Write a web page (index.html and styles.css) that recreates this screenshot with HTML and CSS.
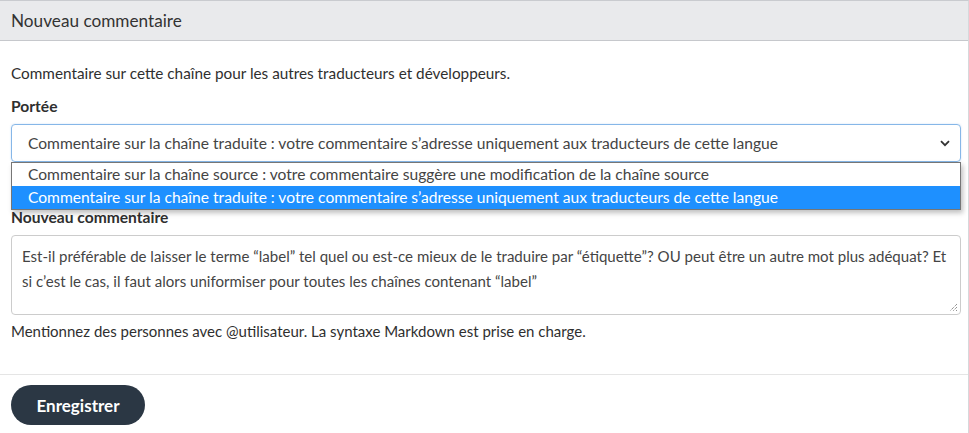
FILE: index.html
```html
<!DOCTYPE html>
<html lang="fr">
<head>
<meta charset="utf-8">
<title>Nouveau commentaire</title>
<link rel="stylesheet" href="styles.css">
</head>
<body>
<div class="panel">
  <div class="panel-heading">Nouveau commentaire</div>
  <div class="panel-body">
    <p class="intro">Commentaire sur cette chaîne pour les autres traducteurs et développeurs.</p>
    <div class="field field-scope">
      <label class="label">Portée</label>
      <div class="select">
        <span class="select-value">Commentaire sur la chaîne traduite : votre commentaire s’adresse uniquement aux traducteurs de cette langue</span>
        <svg class="chevron" width="10" height="7" viewBox="0 0 10 7"><path d="M1 1.2 L5 5.2 L9 1.2" fill="none" stroke="#333" stroke-width="1.8"/></svg>
      </div>
      <ul class="dropdown">
        <li class="option">Commentaire sur la chaîne source : votre commentaire suggère une modification de la chaîne source</li>
        <li class="option selected">Commentaire sur la chaîne traduite : votre commentaire s’adresse uniquement aux traducteurs de cette langue</li>
      </ul>
    </div>
    <div class="field">
      <label class="label">Nouveau commentaire</label>
      <div class="textarea">Est-il préférable de laisser le terme “label” tel quel ou est-ce mieux de le traduire par “étiquette”? OU peut être un autre mot plus adéquat? Et si c’est le cas, il faut alors uniformiser pour toutes les chaînes contenant “label”<svg class="grip" width="9" height="9" viewBox="0 0 9 9"><path d="M8 1 L1 8 M8 4 L4 8 M8 7 L7 8" stroke="#666" stroke-width="1" stroke-dasharray="1 1"/></svg></div>
      <p class="help">Mentionnez des personnes avec @utilisateur. La syntaxe Markdown est prise en charge.</p>
    </div>
  </div>
  <div class="panel-footer">
    <button class="btn">Enregistrer</button>
  </div>
</div>
</body>
</html>
```
FILE: styles.css
```css
* { box-sizing: border-box; }
html, body { margin: 0; padding: 0; background: #fff; }
body {
  font-family: "Lato", "Noto Sans", sans-serif;
  font-size: 15.3px;
  color: #2f2f2f;
  line-height: 22px;
}
.panel {
  border-top: 1px solid #c9cbcf;
  border-right: 1px solid #d6d8db;
  width: 969px;
}
.panel-heading {
  height: 40px;
  background: #e9eaec;
  border-bottom: 1px solid #c6c8cc;
  padding: 0 11px;
  font-size: 17.2px;
  line-height: 39px;
  color: #333;
}
.panel-body {
  padding: 21px 7px 0 11px;
}
.intro { margin: 0 0 11px; }
.field { position: relative; }
.field-scope { margin-bottom: 44px; }
.label {
  display: block;
  font-weight: bold;
  font-size: 15.6px;
  margin-bottom: 7px;
}
.select {
  height: 38px;
  border: 1px solid #86b7e8;
  border-radius: 4px;
  box-shadow: 0 0 2px rgba(100,160,230,0.35);
  display: flex;
  align-items: center;
  padding: 0 10px 0 16px;
  color: #444;
  font-size: 15.6px;
}
.select-value { flex: 1; white-space: nowrap; overflow: hidden; }
.chevron { flex: none; }
.dropdown {
  position: absolute;
  left: 0;
  right: 0;
  top: 67px;
  margin: 0;
  padding: 0;
  list-style: none;
  border: 1px solid #767676;
  background: #fff;
  box-shadow: 2px 3px 5px rgba(0,0,0,0.25);
  z-index: 2;
  font-size: 15.6px;
}
.option {
  height: 23px;
  line-height: 22px;
  padding-left: 16px;
  color: #444;
  white-space: nowrap;
}
.option.selected { background: #1e90ff; color: #fff; }
.textarea {
  position: relative;
  height: 80px;
  border: 1px solid #ccc;
  border-radius: 4px;
  padding: 8px 10px;
  line-height: 25px;
  color: #444;
  font-size: 15.05px;
}
.grip { position: absolute; right: 2px; bottom: 2px; }
.help { margin: 5px 0 0; font-size: 15px; }
.panel-footer {
  margin-top: 32px;
  border-top: 1px solid #e5e5e5;
  padding: 10px 11px 8px;
}
.btn {
  width: 134px;
  height: 40px;
  border: 0;
  border-radius: 20px;
  background: #2b3744;
  color: #fff;
  font-family: inherit;
  font-weight: bold;
  font-size: 17px;
  padding: 0;
}
```
